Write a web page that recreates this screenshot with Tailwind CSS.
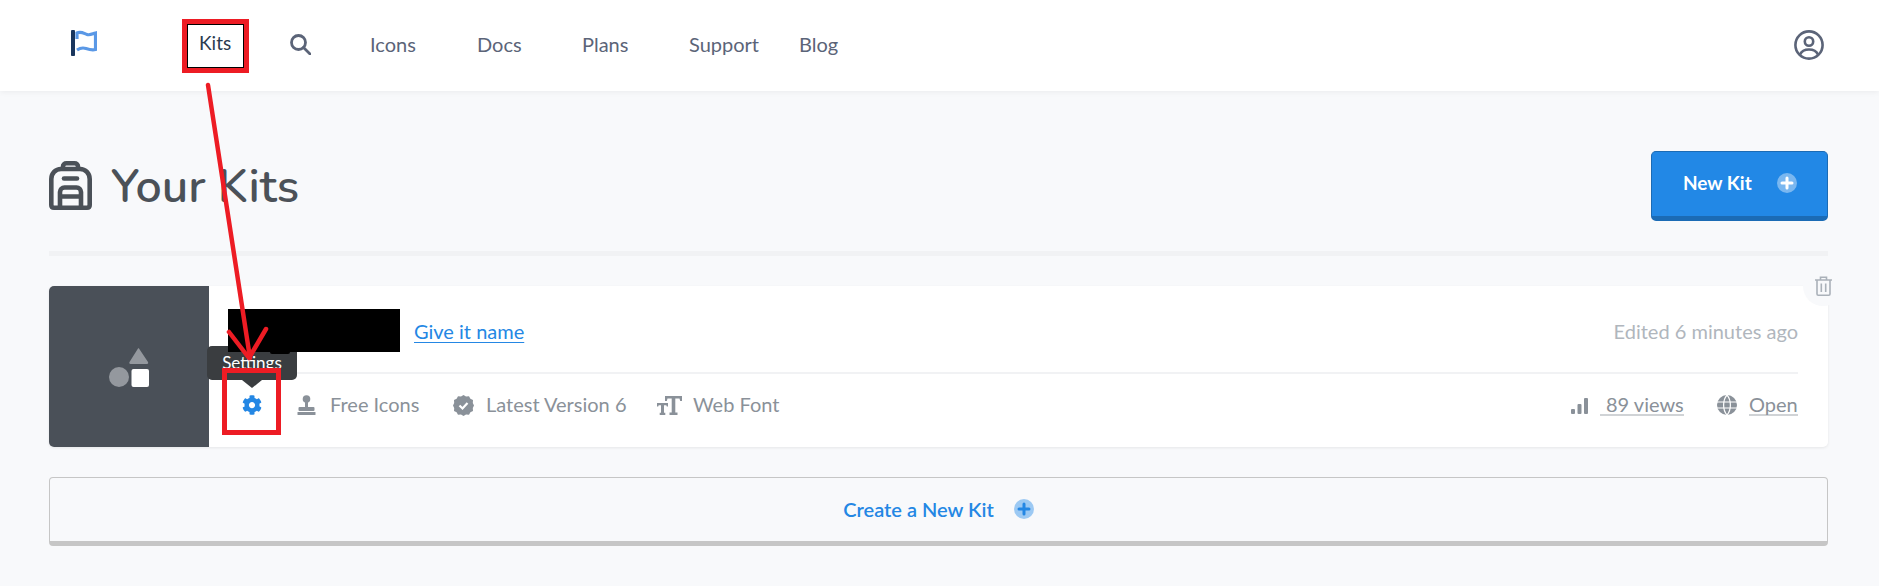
<!DOCTYPE html>
<html>
<head>
<meta charset="utf-8">
<script src="https://cdn.jsdelivr.net/npm/@tailwindcss/browser@4"></script>
</head>
<body class="relative w-[1879px] h-[586px] overflow-hidden bg-[#f8f9fb] font-['Lato','Liberation_Sans',sans-serif]">

<!-- Nav -->
<nav class="h-[91px] bg-white shadow-[0_1px_6px_rgba(0,0,0,0.06)] flex items-center relative text-[20px] text-[#5b6478]">
  <svg class="ml-[71px] w-[26px] h-[26px] mt-[-5px]" viewBox="0 0 26 26" fill="none">
    <path d="M2 1.5V24.5" stroke="#1a365d" stroke-width="4" stroke-linecap="round"/>
    <path d="M6 9V3C10 1 13 3.5 16 4.5C19 5.5 21 4 24.5 3V19.5C21 20.5 18 19.5 15 18.5C12 17.5 9 18 6 20" stroke="#5a98e6" stroke-width="3.2"/>
  </svg>
  <a class="ml-[102px] w-[32px] text-[19px] text-[#2a3b50] mt-[-4px]">Kits</a>
  <svg class="ml-[59px] w-[21px] h-[21px] mt-[-2px]" viewBox="0 0 21 21" fill="none" stroke="#5b6478" stroke-width="2.8"><circle cx="8.5" cy="8.5" r="7"/><path d="M13.5 13.5L20 20" stroke-linecap="round"/></svg>
  <a class="ml-[59px] w-[46px] mt-[-4px]">Icons</a>
  <a class="ml-[61px] w-[47px] mt-[-4px]">Docs</a>
  <a class="ml-[58px] w-[47px] mt-[-4px]">Plans</a>
  <a class="ml-[60px] w-[69px] mt-[-4px]">Support</a>
  <a class="ml-[41px] mt-[-4px]">Blog</a>
  <svg class="ml-auto mr-[55px] w-[30px] h-[30px] mt-[-2px]" viewBox="0 0 30 30" fill="none" stroke="#5b6478" stroke-width="2.6">
    <circle cx="15" cy="15" r="13.6"/><circle cx="15" cy="11.5" r="4.2"/><path d="M6 24.5C8 20 11 19.5 15 19.5C19 19.5 22 20 24 24.5"/>
  </svg>
</nav>

<main class="pl-[49px] pr-[51px]">
  <!-- Header -->
  <header class="h-[165px] border-b-[5px] border-[#f1f2f4] flex items-start justify-between">
    <div class="flex items-center mt-[69px] text-[#4b5158]">
      <svg class="w-[43px] h-[49px]" viewBox="0 0 43 49" fill="none" stroke="#4b5158" stroke-width="4.6" stroke-linejoin="round">
        <path d="M14 8V5.5C14 3.5 15.5 2.3 17.5 2.3H25.5C27.5 2.3 29 3.5 29 5.5V8"/>
        <path d="M12 8H31C36.5 8 40.7 12.5 40.7 18V44C40.7 45.7 39.7 46.7 38 46.7H5C3.3 46.7 2.3 45.7 2.3 44V18C2.3 12.5 6.5 8 12 8Z"/>
        <path d="M15 17.5H28" stroke-linecap="round"/>
        <path d="M11 47V31C11 28.5 13 26.5 15.5 26.5H27.5C30 26.5 32 28.5 32 31V47M11 35.5H32"/>
      </svg>
      <h1 class="ml-[19px] text-[46.5px] leading-[49px] font-semibold font-['Nunito','Lato',sans-serif] mt-[2px]">Your Kits</h1>
    </div>
    <button class="mt-[60px] w-[177px] h-[70px] bg-[#2288e6] border border-[#1b6bb5] border-b-[5px] rounded-[5px] text-white text-[19px] font-bold flex items-center pl-[31px] pb-[2px]">
      New Kit
      <svg class="ml-[25px] w-[20px] h-[20px]" viewBox="0 0 20 20"><circle cx="10" cy="10" r="10" fill="#fff" fill-opacity="0.4"/><path d="M10 5V15M5 10H15" stroke="#fff" stroke-width="3" stroke-linecap="round"/></svg>
    </button>
  </header>

  <!-- Card -->
  <section class="relative mt-[30px] h-[161px] bg-white rounded-[5px] shadow-[0_1px_3px_rgba(0,0,0,0.08)] flex">
    <div class="w-[160px] bg-[#4a5058] rounded-l-[5px] flex items-center justify-center">
      <svg class="w-[40px] h-[40px]" viewBox="0 0 40 40">
        <path d="M30 1.5L39 15C39.5 16 39 17 38 17H21.5C20.5 17 20 16 20.5 15L29 1.5C29.3 1 29.7 1 30 1.5Z" fill="#94989e"/>
        <circle cx="10" cy="30" r="10" fill="#94989e"/>
        <rect x="22.5" y="22" width="17.5" height="18" rx="2" fill="#fff"/>
      </svg>
    </div>
    <div class="flex-1 pl-[19px] pr-[30px] flex flex-col">
      <div class="h-[88px] border-b-2 border-[#f1f2f4] flex items-center relative">
        <div class="relative z-10 w-[172px] h-[43px] bg-black mt-[3px]">
          <div class="absolute left-[42px] top-[41px] w-[20px] h-[4px] rounded-full bg-black"></div>
        </div>
        <a class="ml-[14px] text-[20px] text-[#2487e4] underline decoration-1 underline-offset-[3px] mt-[4px]">Give it name</a>
        <span class="ml-auto text-[20px] text-[#b0b6bd] mt-[3px]">Edited 6 minutes ago</span>
      </div>
      <div class="flex-1 flex items-center text-[20px] text-[#8a9199] mt-[-11px]">
        <svg class="ml-[14px] w-[20px] h-[20px]" viewBox="0 0 512 512" fill="#2487e4"><path d="M487.4 315.7l-42.6-24.6c4.3-23.2 4.3-47 0-70.2l42.6-24.6c4.9-2.8 7.1-8.6 5.5-14-11.1-35.6-30-67.8-54.7-94.6-3.8-4.1-10-5.1-14.8-2.3L380.8 110c-17.9-15.4-38.5-27.3-60.8-35.1V25.8c0-5.6-3.9-10.5-9.4-11.7-36.7-8.2-74.3-7.8-109.2 0-5.5 1.2-9.4 6.1-9.4 11.7V75c-22.2 7.9-42.8 19.8-60.8 35.1L88.7 85.5c-4.9-2.8-11-1.9-14.8 2.3-24.7 26.7-43.6 58.9-54.7 94.6-1.7 5.4.6 11.2 5.5 14L67.3 221c-4.3 23.2-4.3 47 0 70.2l-42.6 24.6c-4.9 2.8-7.1 8.6-5.5 14 11.1 35.6 30 67.8 54.7 94.6 3.8 4.1 10 5.1 14.8 2.3l42.6-24.6c17.9 15.4 38.5 27.3 60.8 35.1v49.2c0 5.6 3.9 10.5 9.4 11.7 36.7 8.2 74.3 7.8 109.2 0 5.5-1.2 9.4-6.1 9.4-11.7v-49.2c22.2-7.9 42.8-19.8 60.8-35.1l42.6 24.6c4.9 2.8 11 1.9 14.8-2.3 24.7-26.7 43.6-58.9 54.7-94.6 1.5-5.5-.7-11.3-5.6-14.1zM256 336c-44.1 0-80-35.9-80-80s35.9-80 80-80 80 35.9 80 80-35.9 80-80 80z"/></svg>
        <svg class="ml-[35px] w-[19px] h-[20px]" viewBox="0 0 19 20" fill="#8a9199"><circle cx="9.5" cy="4" r="3.8"/><rect x="8" y="6" width="3" height="7"/><rect x="1.5" y="12" width="16" height="4" rx="1"/><rect x="0.5" y="17" width="18" height="3" rx="0.5"/></svg>
        <span class="ml-[14px] w-[91px] mt-[-2px]">Free Icons</span>
        <svg class="ml-[32px] w-[21px] h-[21px]" viewBox="0 0 21 21"><path d="M10.5 0L13 1.6L16 1.3L17.4 3.8L20 5L19.8 8L21 10.5L19.8 13L20 16L17.4 17.2L16 19.7L13 19.4L10.5 21L8 19.4L5 19.7L3.6 17.2L1 16L1.2 13L0 10.5L1.2 8L1 5L3.6 3.8L5 1.3L8 1.6Z" fill="#8a9199"/><path d="M6.5 10.5L9.5 13.5L14.5 8" fill="none" stroke="#fff" stroke-width="2.2"/></svg>
        <span class="ml-[12px] w-[141px] mt-[-2px]">Latest Version 6</span>
        <svg class="ml-[30px] w-[25px] h-[19px]" viewBox="0 0 25 19" fill="#8a9199"><path d="M8 0H25V5H23.2L22.5 2.5H18.3V16.5H20.5V19H12.5V16.5H14.7V2.5H10.5L9.8 5H8Z"/><path d="M0 7H11V10.5H9.8L9.3 9.2H7V16.8H8.3V19H2.7V16.8H4V9.2H1.7L1.2 10.5H0Z"/></svg>
        <span class="ml-[11px] mt-[-2px]">Web Font</span>
        <svg class="ml-auto w-[17px] h-[16px] mt-[2px]" viewBox="0 0 17 16" fill="#8a9199"><rect x="0" y="11" width="4" height="5" rx="1"/><rect x="6.5" y="6" width="4" height="10" rx="1"/><rect x="13" y="0" width="4" height="16" rx="1"/></svg>
        <a class="ml-[12px] pl-[6px] w-[84px] border-b-2 border-[#d0d3d6] leading-[20px] whitespace-nowrap mt-[-1px]">89 views</a>
        <svg class="ml-[33px] w-[20px] h-[20px]" viewBox="0 0 20 20"><circle cx="10" cy="10" r="10" fill="#8a9199"/><path d="M0 7H20M0 13H20M10 0C5.5 5 5.5 15 10 20C14.5 15 14.5 5 10 0Z" fill="none" stroke="#fff" stroke-width="1.2"/></svg>
        <a class="ml-[12px] w-[49px] border-b-2 border-[#d0d3d6] leading-[20px] mt-[-1px]">Open</a>
      </div>
    </div>
    <!-- Trash -->
    <div class="absolute right-[-15px] top-[-20px] w-[40px] h-[40px] rounded-full bg-[#f8f9fb] flex items-center justify-center">
      <svg class="w-[17px] h-[20px]" viewBox="0 0 17 20" fill="none" stroke="#aab1b9" stroke-width="1.6"><path d="M0 4H17M5.5 4V1.2H11.5V4M2 4V18C2 18.8 2.6 19.2 3.2 19.2H13.8C14.4 19.2 15 18.8 15 18V4M6.3 7.5V16M10.7 7.5V16"/></svg>
    </div>
    <!-- Tooltip -->
    <div class="absolute left-[158px] top-[60px] w-[90px] h-[34px] rounded-[5px] bg-[#3a3d40] text-white text-[17px] flex items-center justify-center">Settings
      <div class="absolute left-[35px] top-[34px] w-0 h-0 border-x-[10px] border-x-transparent border-t-[8px] border-t-[#3a3d40]"></div>
    </div>
  </section>

  <!-- Create -->
  <button class="mt-[30px] w-full h-[69px] border border-[#c6c6c6] border-t-[1.5px] border-b-[5px] rounded-[4px] flex items-center justify-center text-[#2487e4] text-[20px] font-semibold pb-[2px]">
    Create a New Kit
    <svg class="ml-[20px] w-[20px] h-[20px]" viewBox="0 0 20 20"><circle cx="10" cy="10" r="10" fill="#9cc9f3"/><path d="M10 5V15M5 10H15" stroke="#2487e4" stroke-width="3" stroke-linecap="round"/></svg>
  </button>
</main>

<!-- Annotations drawn over the screenshot -->
<div class="absolute z-20 left-[182px] top-[19px] w-[67px] h-[54px] border-[5px] border-[#ed1c24]"><div class="w-full h-full border border-black"></div></div>
<div class="absolute z-20 left-[222px] top-[368px] w-[59px] h-[67px] border-[5px] border-[#ed1c24]"></div>
<svg class="absolute z-20 left-0 top-0 w-[1879px] h-[586px] pointer-events-none" viewBox="0 0 1879 586" fill="none" stroke="#ed1c24" stroke-width="4.5" stroke-linecap="round" stroke-linejoin="round">
  <path d="M208 85L250 358"/><path d="M229 332L249 358L266 329"/>
</svg>
</body>
</html>
